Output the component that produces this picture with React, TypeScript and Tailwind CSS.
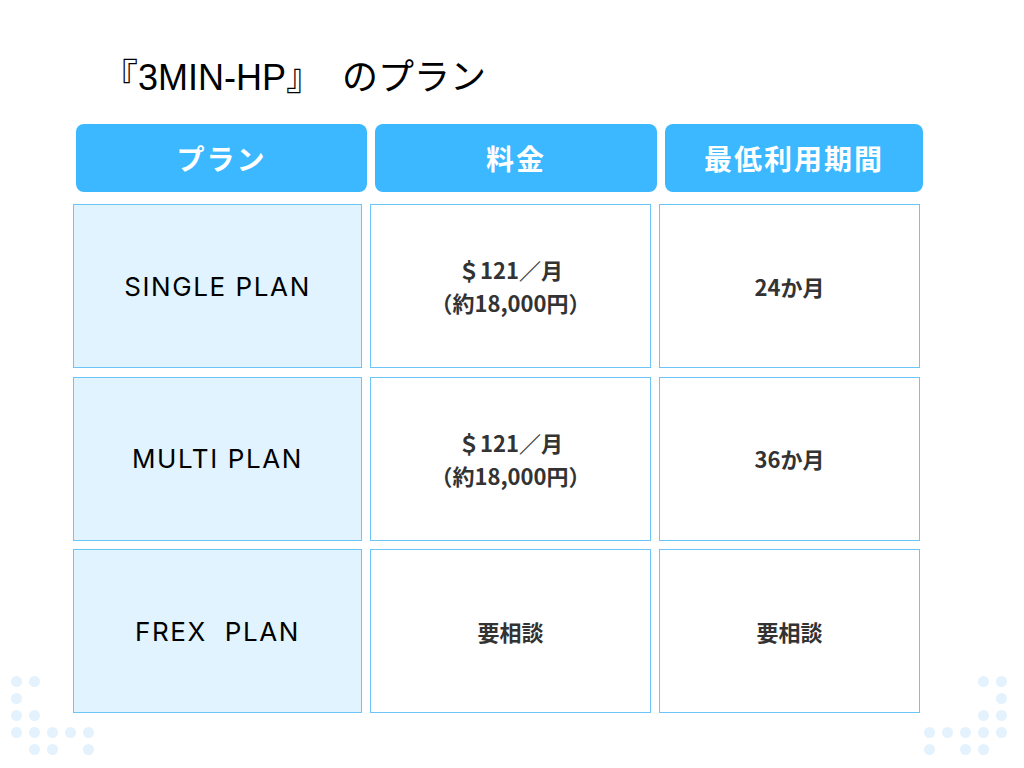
import React from "react";

const rows = [
  { plan: "SINGLE PLAN", price: ["＄121／月", "（約18,000円）"], term: "24か月" },
  { plan: "MULTI PLAN", price: ["＄121／月", "（約18,000円）"], term: "36か月" },
  { plan: "FREX\u00a0\u00a0PLAN", price: ["要相談"], term: "要相談" },
];

// dot pattern cells: 1 = dot, 0 = empty (5 columns x 5 rows)
const leftDots = [
  [1, 1, 0, 0, 0],
  [1, 0, 0, 0, 0],
  [1, 1, 0, 0, 0],
  [1, 1, 1, 1, 1],
  [0, 1, 1, 0, 1],
];
const rightDots = [
  [0, 0, 0, 1, 1],
  [0, 0, 0, 0, 1],
  [0, 0, 0, 1, 1],
  [1, 1, 1, 1, 1],
  [1, 0, 1, 1, 0],
];

function Dots({ pattern, className }: { pattern: number[][]; className: string }) {
  return (
    <div className={"absolute grid grid-cols-[repeat(5,11px)] gap-x-[7px] gap-y-[6px] " + className}>
      {pattern.flat().map((d, i) => (
        <span key={i} className={d ? "w-[11px] h-[11px] rounded-full bg-[#e3f2fd]" : "w-[11px] h-[11px]"} />
      ))}
    </div>
  );
}

const cjk = '"Noto Sans CJK JP", sans-serif';

export default function App() {
  return (
    <div className="relative w-[1024px] h-[768px] bg-white overflow-hidden" style={{ fontFamily: cjk }}>
      <Dots pattern={leftDots} className="left-[11px] top-[676px]" />
      <Dots pattern={rightDots} className="left-[924px] top-[676px]" />

      <div className="relative pt-[56px]">
        <h1
          className="ml-[102px] h-[44px] text-[36px] leading-[44px] text-black whitespace-pre"
          style={{ fontFamily: '"Liberation Sans", "Noto Sans CJK JP", sans-serif' }}
        >
          {"『3MIN-HP』  のプラン"}
        </h1>

        <div className="mt-[24px] ml-[76px] flex gap-2">
          <div className="w-[291px] h-[68px] rounded-lg bg-[#3bb8ff] flex items-center justify-center text-white text-[28px] font-bold tracking-[2px]">
            プラン
          </div>
          <div className="w-[282px] h-[68px] rounded-lg bg-[#3bb8ff] flex items-center justify-center text-white text-[28px] font-bold tracking-[2px]">
            料金
          </div>
          <div className="w-[258px] h-[68px] rounded-lg bg-[#3bb8ff] flex items-center justify-center text-white text-[28px] font-bold tracking-[2px]">
            最低利用期間
          </div>
        </div>

        <div className="mt-[12px] ml-[73px] grid grid-cols-[289px_281px_261px] auto-rows-[164px] gap-x-2 gap-y-[8.5px]">
          {rows.map((r) => (
            <React.Fragment key={r.plan}>
              <div
                className="border border-[#6cc4f7] bg-[#e1f3fe] flex items-center justify-center text-[26px] tracking-[1.6px] text-black"
                style={{ fontFamily: 'Inter, "Noto Sans", sans-serif' }}
              >
                {r.plan}
              </div>
              <div className="border border-[#6cc4f7] bg-white flex flex-col items-center justify-center text-[22px] leading-[33px] font-bold text-[#333]">
                {r.price.map((p) => (
                  <span key={p}>{p}</span>
                ))}
              </div>
              <div className="border border-[#6cc4f7] bg-white flex items-center justify-center text-[22px] font-bold text-[#333]">
                {r.term}
              </div>
            </React.Fragment>
          ))}
        </div>
      </div>
    </div>
  );
}
